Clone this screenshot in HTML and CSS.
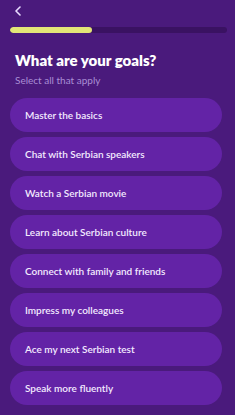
FILE: index.html
```html
<!DOCTYPE html>
<html>
<head>
<meta charset="utf-8">
<link rel="stylesheet" href="styles.css">
</head>
<body>
<div class="screen">
  <div class="topbar">
    <svg class="back" width="8" height="10" viewBox="0 0 8 10"><path d="M6 1 L2 5 L6 9" fill="none" stroke="#e9dcff" stroke-width="1.6" stroke-linecap="round" stroke-linejoin="round"/></svg>
  </div>
  <div class="progress"><div class="fill" style="width:38%"></div></div>
  <h1 class="title">What are your goals?</h1>
  <p class="subtitle">Select all that apply</p>
  <div class="options">
    <div class="option">Master the basics</div>
    <div class="option">Chat with Serbian speakers</div>
    <div class="option">Watch a Serbian movie</div>
    <div class="option">Learn about Serbian culture</div>
    <div class="option">Connect with family and friends</div>
    <div class="option">Impress my colleagues</div>
    <div class="option">Ace my next Serbian test</div>
    <div class="option">Speak more fluently</div>
  </div>
</div>
</body>
</html>
```

FILE: styles.css
```css
html, body {
  margin: 0;
  padding: 0;
  background: #4a1a7c;
}
body {
  font-family: "Lato", "Noto Sans", sans-serif;
  width: 235px;
  height: 415px;
  overflow: hidden;
}
.screen {
  padding: 0 10px 0 10px;
  display: flex;
  flex-direction: column;
}
.topbar {
  height: 20px;
  display: flex;
  align-items: center;
  padding-left: 4px;
  padding-top: 2px;
  box-sizing: border-box;
}
.back {
  display: block;
}
.progress {
  margin-top: 7px;
  height: 6px;
  border-radius: 3px;
  background: #3a1262;
  width: 217px;
  overflow: hidden;
}
.fill {
  height: 100%;
  background: #e2e577;
  border-radius: 3px;
}
.title {
  margin: 17px 0 0 5px;
  font-size: 15px;
  font-weight: 800;
  color: #ffffff;
  line-height: 20px;
}
.subtitle {
  margin: 3px 0 0 5px;
  font-size: 10px;
  color: #a98ed4;
  line-height: 14px;
}
.options {
  margin-top: 11px;
  display: flex;
  flex-direction: column;
  gap: 5px;
}
.option {
  height: 34px;
  width: 212px;
  border-radius: 17px;
  background: #6323a6;
  color: #f3eaff;
  font-size: 10px;
  font-weight: 600;
  display: flex;
  align-items: center;
  padding-left: 15px;
  box-sizing: border-box;
}
```
